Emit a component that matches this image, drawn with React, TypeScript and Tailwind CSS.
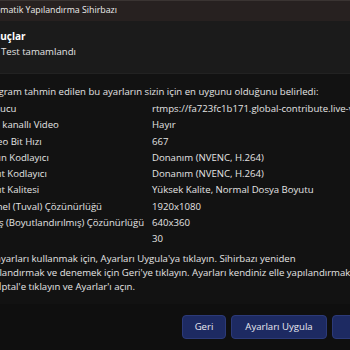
import React from 'react';

const rows: [string, string][] = [
  ['Sunucu', 'rtmps://fa723fc1b171.global-contribute.live-video.net/app'],
  ['Çok kanallı Video', 'Hayır'],
  ['Video Bit Hızı', '667'],
  ['Yayın Kodlayıcı', 'Donanım (NVENC, H.264)'],
  ['Kayıt Kodlayıcı', 'Donanım (NVENC, H.264)'],
  ['Kayıt Kalitesi', 'Yüksek Kalite, Normal Dosya Boyutu'],
  ['Temel (Tuval) Çözünürlüğü', '1920x1080'],
  ['Çıkış (Boyutlandırılmış) Çözünürlüğü', '640x360'],
  ['FPS', '30'],
];

export default function App() {
  return (
    <div
      className="h-[350px] w-[350px] overflow-hidden bg-[#0f0f0f] text-[9.6px] text-[#e4e4e4]"
      style={{ fontFamily: '"Open Sans", "Noto Sans", sans-serif' }}
    >
      <div className="flex h-[21px] items-center border-t border-[#3a3432] bg-[#272120]">
        <span className="-ml-[15px] whitespace-nowrap text-[8.8px] text-[#ececec]">Otomatik Yapılandırma Sihirbazı</span>
      </div>

      <div className="h-[53px] border-b border-[#222] bg-[#1b1b1b] pt-[7px]">
        <div className="-ml-[18px] whitespace-nowrap text-[10px] font-bold leading-[16px] text-white">Sonuçlar</div>
        <div className="pl-px whitespace-nowrap leading-[15px]">Test tamamlandı</div>
      </div>

      <div className="-ml-[17px] h-[230px] w-[420px] bg-[#121212] pt-[10px]">
        <p className="whitespace-nowrap leading-[16px]">
          Program tahmin edilen bu ayarların sizin için en uygunu olduğunu belirledi:
        </p>
        <div className="mt-[1px] grid grid-cols-[169px_1fr]">
          {rows.map(([k, v]) => (
            <React.Fragment key={k}>
              <div className="whitespace-nowrap leading-[16.3px]">{k}</div>
              <div className="whitespace-nowrap leading-[16.3px]">{v}</div>
            </React.Fragment>
          ))}
        </div>
        <p className="-ml-[2px] mt-[4px] whitespace-nowrap leading-[14px]">
          Bu ayarları kullanmak için, Ayarları Uygula'ya tıklayın. Sihirbazı yeniden
          <br />
          yapılandırmak ve denemek için Geri'ye tıklayın. Ayarları kendiniz elle yapılandırmak
          <br />
          için İptal'e tıklayın ve Ayarlar'ı açın.
        </p>
      </div>

      <div className="mt-[11px] flex gap-[5px] pl-[182px]">
        <button className="h-[24px] w-[44px] shrink-0 rounded-[4px] border border-[#2c3a78] bg-[#1d2a62] text-[#e8e8f0]">
          Geri
        </button>
        <button className="h-[24px] w-[96px] shrink-0 rounded-[4px] border border-[#2c3a78] bg-[#1d2a62] text-[#e8e8f0]">
          Ayarları Uygula
        </button>
        <button className="h-[24px] w-[60px] shrink-0 rounded-[4px] border border-[#2c3a78] bg-[#1d2a62] text-[#e8e8f0]">
          İptal
        </button>
      </div>
    </div>
  );
}
